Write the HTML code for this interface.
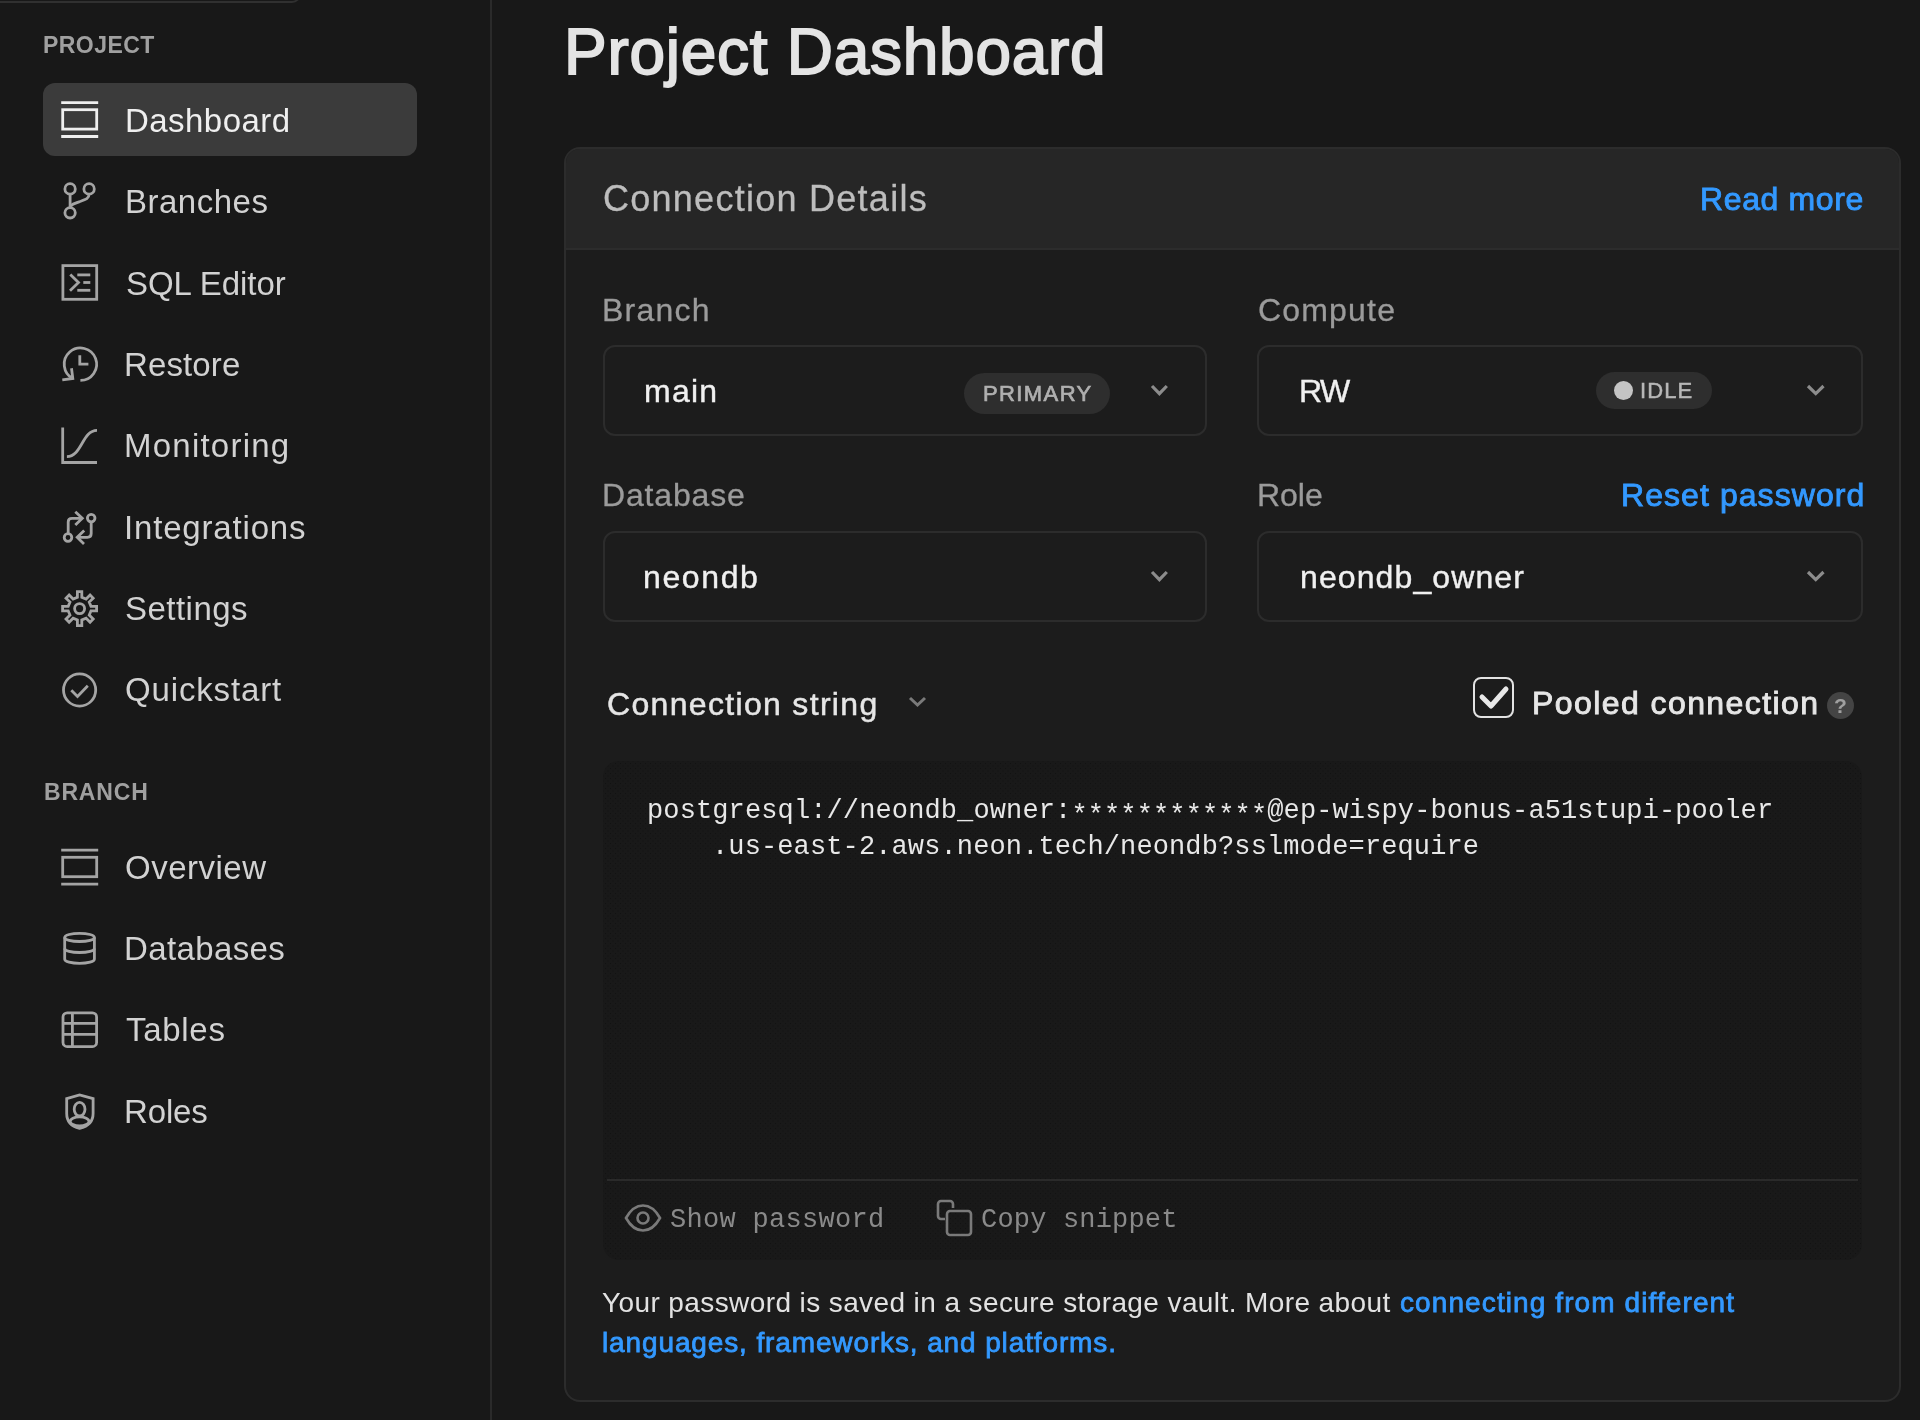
<!DOCTYPE html>
<html><head><meta charset="utf-8">
<style>
*{box-sizing:border-box;margin:0;padding:0}
html,body{width:1920px;height:1420px;overflow:hidden;background:#181818;font-family:"Liberation Sans",sans-serif;position:relative}
.abs{position:absolute}
.t{position:absolute;white-space:pre;line-height:1;will-change:transform}
.ast{position:relative;top:5px}
</style></head><body>
<div class="abs" style="left:-20px;top:-40px;width:321px;height:43px;border:2px solid #303030;border-radius:0 0 9px 0;background:#181818"></div>
<div class="abs" style="left:490px;top:0;width:2px;height:1420px;background:#2a2a2a"></div>
<div class="abs" style="left:43px;top:83px;width:374px;height:73px;border-radius:12px;background:#3b3b3b"></div>
<div class="abs" style="left:564px;top:147px;width:1337px;height:1255px;border:2px solid #2c2c2c;border-radius:16px;background:#1c1c1c;overflow:hidden"><div class="abs" style="left:0;top:0;width:1333px;height:101px;background:#262626;border-bottom:2px solid #2c2c2c"></div></div>
<div class="abs" style="left:602.5px;top:345px;width:604.5px;height:90.5px;border:2px solid #2c2c2c;border-radius:12px"></div>
<div class="abs" style="left:1257px;top:345px;width:605.5px;height:90.5px;border:2px solid #2c2c2c;border-radius:12px"></div>
<div class="abs" style="left:964px;top:373px;width:146px;height:41px;border-radius:21px;background:#2e2e2e"></div>
<div class="abs" style="left:1596px;top:372px;width:116px;height:37px;border-radius:19px;background:#2e2e2e"></div>
<div class="abs" style="left:1613.5px;top:381px;width:19px;height:19px;border-radius:50%;background:#c4c4c4"></div>
<svg class="abs" style="left:1149px;top:382.5px" width="20.8" height="13.6"><polyline points="3,3 10.4,10.6 17.8,3" fill="none" stroke="#8c8c8c" stroke-width="3.2"/></svg>
<svg class="abs" style="left:1804.5px;top:382.5px" width="21.5" height="13.6"><polyline points="3,3 10.75,10.6 18.5,3" fill="none" stroke="#8c8c8c" stroke-width="3.2"/></svg>
<div class="abs" style="left:602.5px;top:531px;width:604.5px;height:90.5px;border:2px solid #2c2c2c;border-radius:12px"></div>
<div class="abs" style="left:1257px;top:531px;width:605.5px;height:90.5px;border:2px solid #2c2c2c;border-radius:12px"></div>
<svg class="abs" style="left:1149px;top:568.5px" width="20.8" height="13.6"><polyline points="3,3 10.4,10.6 17.8,3" fill="none" stroke="#8c8c8c" stroke-width="3.2"/></svg>
<svg class="abs" style="left:1804.5px;top:568.5px" width="21.5" height="13.6"><polyline points="3,3 10.75,10.6 18.5,3" fill="none" stroke="#8c8c8c" stroke-width="3.2"/></svg>
<svg class="abs" style="left:907px;top:695px" width="21" height="13"><polyline points="3,3 10.5,10 18,3" fill="none" stroke="#7a7a7a" stroke-width="3.0"/></svg>
<div class="abs" style="left:1473px;top:677px;width:41px;height:41px;border:2.5px solid #e2e2e2;border-radius:8px"></div>
<svg class="abs" style="left:1473px;top:677px" width="41" height="41"><polyline points="9,20 18,29 33,12" fill="none" stroke="#e8e8e8" stroke-width="5" stroke-linecap="round" stroke-linejoin="round"/></svg>
<div class="abs" style="left:1827px;top:691.5px;width:27px;height:27px;border-radius:50%;background:#444"></div>
<div class="t" style="left:1827px;top:691.5px;width:27px;height:27px;line-height:27px;text-align:center;font-size:21px;color:#a0a0a0;font-weight:bold">?</div>
<div class="abs" style="left:603px;top:761px;width:1259px;height:499px;border-radius:16px;background-color:#191919;background-image:radial-gradient(circle,#121212 0.5px,transparent 0.9px),radial-gradient(circle,#121212 0.5px,transparent 0.9px);background-size:5px 5px,5px 5px;background-position:0 0,2.5px 2.5px"></div>
<div class="abs" style="left:607px;top:1179px;width:1251px;height:2px;background:#2a2a2a"></div>
<svg class="abs" style="left:623px;top:1202px" width="40" height="32" viewBox="0 0 40 32"><path d="M3,16 C8,7 14,3.5 20,3.5 C26,3.5 32,7 37,16 C32,25 26,28.5 20,28.5 C14,28.5 8,25 3,16 Z" fill="none" stroke="#7a7a7a" stroke-width="2.6"/><circle cx="20" cy="16" r="5.5" fill="none" stroke="#7a7a7a" stroke-width="2.6"/></svg>
<svg class="abs" style="left:935px;top:1198px" width="40" height="40" viewBox="0 0 40 40"><path d="M18,10 V6 a3,3 0 0 0 -3,-3 H6 a3,3 0 0 0 -3,3 V18 a3,3 0 0 0 3,3 H10" fill="none" stroke="#7a7a7a" stroke-width="2.6"/><rect x="12" y="13" width="24" height="24" rx="3" fill="none" stroke="#7a7a7a" stroke-width="2.6"/></svg>
<svg class="abs" style="left:0;top:0" width="490" height="1420" viewBox="0 0 490 1420" fill="none" stroke="#a4a4a4" stroke-width="2.8"><g stroke="#efefef"><line x1="61.2" y1="102.6" x2="98.2" y2="102.6"/><rect x="62.7" y="109.7" width="34" height="19.4"/><line x1="61.2" y1="136.5" x2="98.2" y2="136.5"/></g><circle cx="70.1" cy="188.9" r="5.2"/><circle cx="89.1" cy="188.9" r="5.2"/><circle cx="70.1" cy="212.8" r="5.2"/><line x1="70.1" y1="194.1" x2="70.1" y2="207.6"/><path d="M89.1,194.1 C89.1,198.5 86,199.5 80,201.5 C74,203.5 70.6,204.5 70.3,207"/><rect x="62.9" y="265.6" width="33.8" height="33.7"/><polyline points="70.3,274.4 78.5,282.5 70.0,290.7"/><line x1="77.3" y1="274.9" x2="90.3" y2="274.9"/><line x1="83.3" y1="282.5" x2="90.3" y2="282.5"/><line x1="77.3" y1="290.3" x2="90.3" y2="290.3"/><path d="M80.4,380.4 A16.2,16.2 0 1 0 72.8,378.5"/><polyline points="71.5,368.2 72.8,378.5 62.3,379.8"/><polyline points="79.8,355.3 79.8,364.2 88.4,364.2"/><polyline points="62.7,427.4 62.7,462.5 97.0,462.5"/><path d="M66.9,456.6 C82,456.6 82,430.4 97,430.4"/><circle cx="91.2" cy="518.1" r="3.8"/><circle cx="68.0" cy="537.5" r="3.8"/><path d="M68.2,533.6 V522 Q68.2,518.3 72,518.3 H82.3"/><polyline points="75.3,511.7 82.3,518.3 75.3,525.1"/><path d="M91.2,522 V533.5 Q91.2,537.3 87.4,537.3 H77.2"/><polyline points="84.2,530.4 77.2,537.3 84.0,543.9"/><path d="M77.40,597.21 L77.40,591.60 L81.80,591.60 L81.80,597.21 L86.10,598.99 L90.07,595.02 L93.18,598.13 L89.21,602.10 L90.99,606.40 L96.60,606.40 L96.60,610.80 L90.99,610.80 L89.21,615.10 L93.18,619.07 L90.07,622.18 L86.10,618.21 L81.80,619.99 L81.80,625.60 L77.40,625.60 L77.40,619.99 L73.10,618.21 L69.13,622.18 L66.02,619.07 L69.99,615.10 L68.21,610.80 L62.60,610.80 L62.60,606.40 L68.21,606.40 L69.99,602.10 L66.02,598.13 L69.13,595.02 L73.10,598.99 Z" stroke-linejoin="miter"/><circle cx="79.6" cy="608.6" r="5.0"/><circle cx="79.6" cy="690" r="16.1"/><polyline points="71.3,690.2 77.5,696.4 87.8,685.8"/><line x1="61.2" y1="850.2" x2="98.2" y2="850.2"/><rect x="62.7" y="857.3000000000001" width="34" height="19.4"/><line x1="61.2" y1="884.1" x2="98.2" y2="884.1"/><ellipse cx="79.55" cy="937.4" rx="14.85" ry="4.1"/><path d="M64.7,937.4 V959.2 A14.85,4.1 0 0 0 94.4,959.2 V937.4"/><path d="M64.7,948.4 A14.85,4.1 0 0 0 94.4,948.4"/><rect x="63" y="1012.8" width="33.6" height="33.8" rx="4.2"/><line x1="72.4" y1="1012.8" x2="72.4" y2="1046.6"/><line x1="63" y1="1023.4" x2="96.6" y2="1023.4"/><line x1="63" y1="1034.4" x2="96.6" y2="1034.4"/><path d="M66.7,1098.6 L79.6,1095.0 L93.1,1098.6 V1113.5 C93.1,1121.5 87.5,1126.5 79.6,1128.3 C71.7,1126.5 66.7,1121.5 66.7,1113.5 Z"/><ellipse cx="79.6" cy="1109.2" rx="5.4" ry="6.8"/><ellipse cx="79.6" cy="1121.4" rx="9.4" ry="4.5"/></svg>
<div class="t" id="project" style="left:42.94px;top:33.53px;font-size:23px;color:#a0a0a0;font-family:'Liberation Sans',sans-serif;letter-spacing:0.460px;font-weight:bold">PROJECT</div>
<div class="t" id="nav0" style="left:125.20px;top:103.57px;font-size:33px;color:#efefef;font-family:'Liberation Sans',sans-serif;letter-spacing:0.450px;">Dashboard</div>
<div class="t" id="nav1" style="left:125.20px;top:185.07px;font-size:33px;color:#d2d2d2;font-family:'Liberation Sans',sans-serif;letter-spacing:0.501px;">Branches</div>
<div class="t" id="nav2" style="left:125.76px;top:266.57px;font-size:33px;color:#d2d2d2;font-family:'Liberation Sans',sans-serif;letter-spacing:-0.050px;">SQL Editor</div>
<div class="t" id="nav3" style="left:123.96px;top:347.87px;font-size:33px;color:#d2d2d2;font-family:'Liberation Sans',sans-serif;letter-spacing:0.120px;">Restore</div>
<div class="t" id="nav4" style="left:123.96px;top:429.27px;font-size:33px;color:#d2d2d2;font-family:'Liberation Sans',sans-serif;letter-spacing:1.230px;">Monitoring</div>
<div class="t" id="nav5" style="left:123.64px;top:510.77px;font-size:33px;color:#d2d2d2;font-family:'Liberation Sans',sans-serif;letter-spacing:0.826px;">Integrations</div>
<div class="t" id="nav6" style="left:125.44px;top:592.07px;font-size:33px;color:#d2d2d2;font-family:'Liberation Sans',sans-serif;letter-spacing:0.476px;">Settings</div>
<div class="t" id="nav7" style="left:125.44px;top:673.47px;font-size:33px;color:#d2d2d2;font-family:'Liberation Sans',sans-serif;letter-spacing:0.850px;">Quickstart</div>
<div class="t" id="branchsec" style="left:43.60px;top:780.53px;font-size:23px;color:#a0a0a0;font-family:'Liberation Sans',sans-serif;letter-spacing:0.820px;font-weight:bold">BRANCH</div>
<div class="t" id="nav8" style="left:124.94px;top:851.37px;font-size:33px;color:#d2d2d2;font-family:'Liberation Sans',sans-serif;letter-spacing:0.501px;">Overview</div>
<div class="t" id="nav9" style="left:124.04px;top:932.07px;font-size:33px;color:#d2d2d2;font-family:'Liberation Sans',sans-serif;letter-spacing:0.383px;">Databases</div>
<div class="t" id="nav10" style="left:125.84px;top:1013.37px;font-size:33px;color:#d2d2d2;font-family:'Liberation Sans',sans-serif;letter-spacing:0.702px;">Tables</div>
<div class="t" id="nav11" style="left:124.04px;top:1094.57px;font-size:33px;color:#d2d2d2;font-family:'Liberation Sans',sans-serif;letter-spacing:-0.135px;">Roles</div>
<div class="t" id="title" style="left:563.90px;top:19.82px;font-size:64px;color:#e4e4e4;font-family:'Liberation Sans',sans-serif;letter-spacing:0.725px;-webkit-text-stroke:1.8px #e4e4e4">Project Dashboard</div>
<div class="t" id="cdetails" style="left:602.60px;top:181.33px;font-size:36px;color:#bdbdbd;font-family:'Liberation Sans',sans-serif;letter-spacing:1.265px;-webkit-text-stroke:0.3px #bdbdbd">Connection Details</div>
<div class="t" id="readmore" style="left:1700.20px;top:182.71px;font-size:32px;color:#3399ff;font-family:'Liberation Sans',sans-serif;letter-spacing:0.625px;-webkit-text-stroke:0.9px #3399ff">Read more</div>
<div class="t" id="lbranch" style="left:601.62px;top:293.91px;font-size:32px;color:#9b9b9b;font-family:'Liberation Sans',sans-serif;letter-spacing:1.216px;-webkit-text-stroke:0.3px #9b9b9b">Branch</div>
<div class="t" id="lcompute" style="left:1258.10px;top:293.91px;font-size:32px;color:#9b9b9b;font-family:'Liberation Sans',sans-serif;letter-spacing:1.180px;-webkit-text-stroke:0.3px #9b9b9b">Compute</div>
<div class="t" id="vmain" style="left:644.12px;top:374.91px;font-size:32px;color:#f0f0f0;font-family:'Liberation Sans',sans-serif;letter-spacing:1.220px;-webkit-text-stroke:0.4px #f0f0f0">main</div>
<div class="t" id="vrw" style="left:1299.46px;top:374.91px;font-size:32px;color:#f0f0f0;font-family:'Liberation Sans',sans-serif;letter-spacing:-1.480px;-webkit-text-stroke:0.4px #f0f0f0">RW</div>
<div class="t" id="primary" style="left:983.10px;top:382.58px;font-size:22px;color:#b0b0b0;font-family:'Liberation Sans',sans-serif;letter-spacing:1.400px;-webkit-text-stroke:0.7px #b0b0b0">PRIMARY</div>
<div class="t" id="idle" style="left:1640.20px;top:379.98px;font-size:22px;color:#b8b8b8;font-family:'Liberation Sans',sans-serif;letter-spacing:1.100px;-webkit-text-stroke:0.5px #b8b8b8">IDLE</div>
<div class="t" id="ldb" style="left:602.28px;top:479.16px;font-size:32px;color:#9b9b9b;font-family:'Liberation Sans',sans-serif;letter-spacing:0.846px;-webkit-text-stroke:0.3px #9b9b9b">Database</div>
<div class="t" id="lrole" style="left:1257.20px;top:479.16px;font-size:32px;color:#9b9b9b;font-family:'Liberation Sans',sans-serif;letter-spacing:-0.020px;-webkit-text-stroke:0.3px #9b9b9b">Role</div>
<div class="t" id="reset" style="left:1620.78px;top:479.16px;font-size:32px;color:#3399ff;font-family:'Liberation Sans',sans-serif;letter-spacing:1.066px;-webkit-text-stroke:0.9px #3399ff">Reset password</div>
<div class="t" id="vneondb" style="left:643.46px;top:560.91px;font-size:32px;color:#f0f0f0;font-family:'Liberation Sans',sans-serif;letter-spacing:1.628px;-webkit-text-stroke:0.4px #f0f0f0">neondb</div>
<div class="t" id="vowner" style="left:1299.62px;top:560.91px;font-size:32px;color:#f0f0f0;font-family:'Liberation Sans',sans-serif;letter-spacing:1.103px;-webkit-text-stroke:0.4px #f0f0f0">neondb_owner</div>
<div class="t" id="cstring" style="left:606.68px;top:687.61px;font-size:32px;color:#e6e6e6;font-family:'Liberation Sans',sans-serif;letter-spacing:1.324px;-webkit-text-stroke:0.5px #e6e6e6">Connection string</div>
<div class="t" id="pooled" style="left:1531.54px;top:686.61px;font-size:32px;color:#e6e6e6;font-family:'Liberation Sans',sans-serif;letter-spacing:1.424px;-webkit-text-stroke:0.9px #e6e6e6">Pooled connection</div>
<div class="t" id="code1" style="left:647.04px;top:798.00px;font-size:27px;color:#e8e8e8;font-family:'Liberation Mono',monospace;letter-spacing:0.119px;">postgresql://neondb_owner:<span class="ast">************</span>@ep-wispy-bonus-a51stupi-pooler</div>
<div class="t" id="code2" style="left:712.20px;top:834.30px;font-size:27px;color:#e8e8e8;font-family:'Liberation Mono',monospace;letter-spacing:0.120px;">.us-east-2.aws.neon.tech/neondb?sslmode=require</div>
<div class="t" id="showpw" style="left:669.76px;top:1206.80px;font-size:27px;color:#8a8a8a;font-family:'Liberation Mono',monospace;letter-spacing:0.295px;">Show password</div>
<div class="t" id="copysn" style="left:981.10px;top:1206.80px;font-size:27px;color:#8a8a8a;font-family:'Liberation Mono',monospace;letter-spacing:0.182px;">Copy snippet</div>
<div class="t" id="para1a" style="left:602.10px;top:1288.80px;font-size:28px;color:#e2e2e2;font-family:'Liberation Sans',sans-serif;letter-spacing:0.398px;">Your password is saved in a secure storage vault. More about</div>
<div class="t" id="para1b" style="left:1400.10px;top:1288.80px;font-size:28px;color:#3399ff;font-family:'Liberation Sans',sans-serif;letter-spacing:1.100px;-webkit-text-stroke:0.8px #3399ff">connecting from different</div>
<div class="t" id="para2" style="left:602.10px;top:1328.80px;font-size:28px;color:#3399ff;font-family:'Liberation Sans',sans-serif;letter-spacing:0.875px;-webkit-text-stroke:0.8px #3399ff">languages, frameworks, and platforms.</div>
</body></html>
